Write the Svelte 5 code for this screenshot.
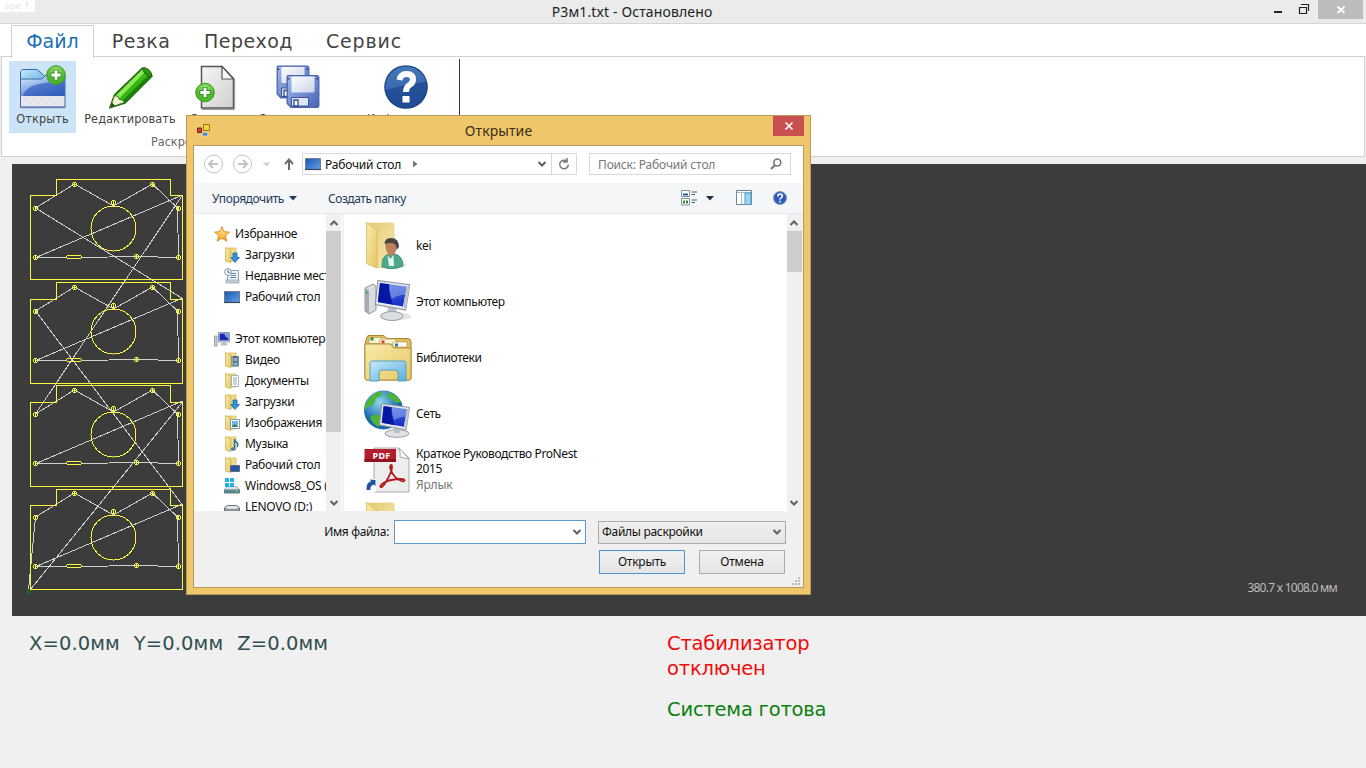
<script>
  const tabs = [
    { label: 'Файл', cls: 'file' },
    { label: 'Резка', cls: 'cut' },
    { label: 'Переход', cls: 'jump' },
    { label: 'Сервис', cls: 'service' }
  ];

  const tools = [
    { label: 'Открыть', icon: 'open', cls: 't-open' },
    { label: 'Редактировать', icon: 'pencil', cls: 't-edit' },
    { label: 'Создать', icon: 'newdoc', cls: 't-new' },
    { label: 'Сохранить как', icon: 'save', cls: 't-save' },
    { label: 'Информация', icon: 'help', cls: 't-help' }
  ];

  const favourites = [
    { label: 'Загрузки', icon: 'downloads' },
    { label: 'Недавние места', icon: 'recent' },
    { label: 'Рабочий стол', icon: 'desktop' }
  ];

  const computer = [
    { label: 'Видео', icon: 'video' },
    { label: 'Документы', icon: 'documents' },
    { label: 'Загрузки', icon: 'downloads' },
    { label: 'Изображения', icon: 'pictures' },
    { label: 'Музыка', icon: 'music' },
    { label: 'Рабочий стол', icon: 'deskfolder' },
    { label: 'Windows8_OS (C:)', icon: 'osdrive' },
    { label: 'LENOVO (D:)', icon: 'drive' }
  ];

  const files = [
    { label: 'kei', icon: 'user' },
    { label: 'Этот компьютер', icon: 'pc' },
    { label: 'Библиотеки', icon: 'libraries' },
    { label: 'Сеть', icon: 'network' },
    { label: 'Краткое Руководство ProNest 2015', note: 'Ярлык', icon: 'pdf' },
    { label: '', icon: 'folder' }
  ];

  // dy moves the holes, top / shoulder / bottom are the edges of the sheet outline
  const parts = [
    { dy: 0, top: 179.5, shoulder: 195.5, bottom: 279.5 },
    { dy: 103, top: 282.5, shoulder: 299.5, bottom: 383.5 },
    { dy: 206, top: 385.5, shoulder: 402.5, bottom: 486.5 },
    { dy: 309, top: 489.5, shoulder: 505.5, bottom: 589.5 }
  ];
  const holes = [[74, 184], [152, 184], [113, 202], [35, 208], [178, 208], [35, 257], [136, 256], [178, 257]];
</script>

{#snippet plus(cx, cy, r)}
  <circle {cx} {cy} {r} fill="url(#green)" stroke="#3f9a22" stroke-width="1" />
  <path d="M{cx - 5.6} {cy}H{cx + 5.6}M{cx} {cy - 5.6}V{cy + 5.6}" stroke="#3b8d22" stroke-width="5" />
  <path d="M{cx - 4.7} {cy}H{cx + 4.7}M{cx} {cy - 4.7}V{cy + 4.7}" stroke="#fff" stroke-width="2.8" />
{/snippet}

{#snippet floppy(x, y)}
  <g transform="translate({x} {y})">
    <path d="M1.5 0.7H31l1.3 1.3V31l-1.3 1.3H4.5L0.7 28.5V1.5Z" fill="url(#disk)" stroke="#4a63ab" stroke-width="1.3" />
    <path d="M5 1.5H28V16.5q0 1-1 1H6q-1 0-1-1Z" fill="url(#silver)" />
    <path d="M5 22.5H22V31H5Z" fill="#dfe5f2" stroke="#3b549e" stroke-width="1" />
    <path d="M7.5 25h4v6h-4Z" fill="#fff" stroke="#334a92" stroke-width="1.3" />
    <path d="M2 3v1.5M30.5 3v1.5" stroke="#26366d" stroke-width="1.5" />
  </g>
{/snippet}

{#snippet toolIcon(name)}
  <svg class="tool-icon" viewBox="0 0 48 48">
    {#if name === 'open'}
      <path d="M1.500 18V7.500L3.500 5.500H18l8 7v8H1.500Z" fill="url(#sky)" stroke="#3568b4" />
      <path d="M1.500 15H23l4-4H46v32.500H1.500Z" fill="url(#blue)" stroke="#4666a6" />
      <path d="M4 31q3-7 12-10 10-3 29.500-4V32H4Z" fill="#2450b8" opacity=".6" />
      <path d="M2 32H45.500V42.500H2Z" fill="#e6e8ee" />
      <path d="M5 35h1m3 0h1m3 0h1m3 0h1m3 0h1m3 0h1m3 0h1m3 0h1m3 0h1m3 0h1M7 38h1m3 0h1m3 0h1m3 0h1m3 0h1m3 0h1m3 0h1m3 0h1m3 0h1" stroke="#c4cad6" />
      <path d="M2 43.500H46" stroke="#6f84a8" stroke-width="1.500" />
      {@render plus(37, 11, 9.300)}
    {:else if name === 'pencil'}
      <path d="M4 43.500L8.500 31 36.500 4q6 .5 9.500 8L19 39Z" fill="#39b417" stroke="#23650f" stroke-width="1.500" />
      <path d="M9.500 32L37 5l3.500 1.500L13 34.500Z" fill="#8bea55" />
      <path d="M16 37L44 10l2 2.500L19 38.500Z" fill="#168207" />
      <path d="M4 43.500l4.500-12 3.500 1 1.500 3 3 .5 2 2.500Z" fill="#f4efd0" stroke="#297a15" />
      <path d="M4 43.500l2-5 3 3.200Z" fill="#244715" />
      <ellipse cx="41.300" cy="8" rx="5.300" ry="2.400" transform="rotate(45 41.300 8)" fill="#2a9a13" stroke="#23690f" />
    {:else if name === 'newdoc'}
      <path d="M10.500 2.500H31l11.500 12V44H10.500Z" fill="url(#page)" stroke="#555" stroke-width="1.500" />
      <path d="M31 2.500V15H42.500Z" fill="#f9f9f9" stroke="#555" stroke-width="1.200" />
      <path d="M11 45.500H43.700V15" stroke="#999" fill="none" />
      {@render plus(14, 28.500, 9.300)}
    {:else if name === 'save'}
      {@render floppy(2.500, 1.500)}
      {@render floppy(12.500, 11)}
    {:else}
      <circle cx="24" cy="23" r="21.800" fill="#1d4688" />
      <circle cx="24" cy="23" r="20.500" fill="url(#help)" />
      <path d="M3.500 26Q22 21 44.500 17.500A20.500 20.500 0 0 1 4 29Z" fill="#173f86" opacity=".6" />
      <path d="M17.500 16q1-6 7-6 6.500 0 6.500 5.500 0 3.500-3.500 5.500-3.500 2-3.500 7" fill="none" stroke="#fff" stroke-width="6" />
      <path d="M20.500 32h7v6.500h-7Z" fill="#fff" />
    {/if}
  </svg>
{/snippet}

{#snippet monitor()}
  <path d="M12 2L43 6 39 31 9.500 25.500Z" fill="#e5e7ec" stroke="#8c939e" stroke-width="1" />
  <path d="M14 4.500L40 8 36.500 27.500 12 23Z" fill="url(#lcd)" />
  <path d="M14 4.500L23 5.700Q22 15 27 25.700L12 23Z" fill="#0717a4" />
  <path d="M23 5.700L40 8 38.500 16Q32 16 25.500 20Q23 12 23 5.700Z" fill="#9bb8f0" opacity=".5" />
  <path d="M40 8l3-2-4 25-2.500-3.500Z" fill="#bfc4cd" />
{/snippet}

{#snippet bigIcon(name)}
  <svg class="big-icon" viewBox="0 0 48 48">
    {#if name === 'user' || name === 'folder'}
      <path d="M4 1l24 0q2 0 2 2V42L14 46Z" fill="url(#folderback)" stroke="#e6cf7a" stroke-width=".7" />
      <path d="M2.500 0.500L13 8V46L2.500 41.500Z" fill="url(#folder)" stroke="#d5b95d" stroke-width=".8" />
      {#if name === 'user'}
        <ellipse cx="32" cy="43" rx="10" ry="3" fill="#bbb" opacity=".45" />
        <path d="M18 45q-1-12 8-13h5q8 2 8 12-10 5-21 1Z" fill="#4ea88a" stroke="#2b7a63" stroke-width=".7" />
        <path d="M23.500 33l3 4 3-4 .5 11h-5Z" fill="#e4f4ee" />
        <path d="M21.500 20q5-4 11 0 1 12-5.500 14Q20.500 31 21.500 20Z" fill="#b98258" />
        <path d="M20.500 22q0-6 6.500-6 8 0 8 9l-2.500 3q0-7-5-7-4 0-7 1Z" fill="#4b4644" />
      {/if}
    {:else if name === 'pc'}
      <path d="M1 10L9 6l3 2V32L5 36 1 33Z" fill="#d9dce1" stroke="#9498a0" />
      <path d="M1 10l4 2V36L1 33Z" fill="#a6abb3" />
      <path d="M2.500 13v3" stroke="#38a349" stroke-width="1.500" />
      <ellipse cx="31" cy="38.500" rx="16" ry="4" fill="#bbb" opacity=".4" />
      <path d="M24 29h8l1 7H23Z" fill="#bfc3cb" />
      <ellipse cx="28" cy="38" rx="11" ry="4.500" fill="#dadde2" stroke="#9ba0a8" />
      <g transform="translate(1.500 .5) scale(1.030 1.020)">{@render monitor()}</g>
    {:else if name === 'libraries'}
      <path d="M1 10l2-7q.5-1.500 2-1.500H20l3 3H44q2.500 0 3 3V44q0 2-2 2H3q-2 0-2-2Z" fill="#e2bd5c" stroke="#a98431" />
      <path d="M5 3.500h16l3 6H5Z" fill="#fbf4d5" stroke="#b99849" stroke-width=".7" />
      <path d="M16 5H31l3 5H15Z" fill="#fbf4d5" stroke="#b99849" stroke-width=".7" />
      <path d="M29 8H43v5H29Z" fill="#fff" stroke="#b99849" stroke-width=".7" />
      <path d="M6.500 3.500h3v3h-3Z" fill="#2c9240" /><path d="M17.500 6.500h3v3h-3Z" fill="#d33b24" /><path d="M31 9.500h3v3h-3Z" fill="#2c78b4" />
      <path d="M1 10H26l4 4H47V44q0 2-2 2H3q-2 0-2-2Z" fill="url(#folder)" stroke="#b28f3c" />
      <path d="M6 29q0-2 2-2H40q2 0 2 2V47H34V39q0-3-3-3H18q-3 0-3 3v8H6Z" fill="url(#sky)" stroke="#579fc1" />
    {:else if name === 'network'}
      <circle cx="19.500" cy="20" r="19.500" fill="url(#globe)" />
      <path d="M4 10Q10 3 16 1q4 2 1 5l-5 2-2 6-6 3-3 3Q0 15 4 10ZM24 2q9 2 13 10l-5 1-4-4-5-1ZM9 25l6 0 3 5-3 7q-7-3-9-10Z" fill="#4eb53b" />
      <ellipse cx="33" cy="43.500" rx="12" ry="3.800" fill="#dfe1e5" stroke="#989da5" />
      <path d="M30 37h6v6h-6Z" fill="#bcc1c9" />
      <g transform="translate(7 12) scale(.9)">{@render monitor()}</g>
    {:else if name === 'pdf'}
      <path d="M10 2H35l10 10V46H10Z" fill="#ededed" stroke="#aaa" />
      <path d="M35 2q2 6 1 9l9 2Z" fill="#fff" stroke="#aaa" />
      <path d="M.500 3H32V16H.500Z" fill="#b21c2c" /><path d="M.500 13H32v3H.500Z" fill="#92121f" />
      <text x="8.500" y="12.800" class="pdf-label">PDF</text>
      <path d="M27 19q-1.500 1-.5 4 3 9 11 12 2 1 3-.5 0-2-6-1.500-9 .5-15 4-4 2.500-3 4 2 1 6-6 5-9 5.500-13 0-4-1-3Z" fill="none" stroke="#b21920" stroke-width="1.800" />
      <path d="M0 33H12V46H0Z" fill="#fff" />
      <path d="M2.500 44Q2 36 7 35.500L6 33.500 11.500 34V40L9.800 38.500Q5.500 40 6.500 44Z" fill="#1b57a1" />
    {/if}
  </svg>
{/snippet}

{#snippet smallIcon(name)}
  <svg class="small-icon" viewBox="0 0 16 16">
    {#if name === 'star'}
      <path d="M8 .700l2 5 5.500.4-4.200 3.600 1.500 5.500L8 12.200l-4.800 3 1.500-5.500L.500 6.100 6 5.700Z" fill="url(#star)" stroke="#dc8520" stroke-width=".9" />
    {:else if name === 'desktop'}
      <path d="M.500 2.500h15v11H.500Z" fill="url(#screen)" stroke="#6b7e91" />
      <path d="M0 13.500h16" stroke="#35475a" stroke-width="1.200" />
    {:else if name === 'computer'}
      <path d="M.500 5h2.500v10H.500Z" fill="#c8cdd3" stroke="#7d848c" stroke-width=".7" />
      <path d="M4.500 1.500h11v9.500h-11Z" fill="#e1e3e8" stroke="#969ca6" />
      <path d="M5.500 2.500h9v7h-9Z" fill="#142ab4" /><path d="M10 2.500h4.500v5Q11 6 10 2.500Z" fill="#86a4e8" />
      <path d="M8 11.500h4l1.500 3h-7Z" fill="#b6bbc4" />
    {:else if name === 'recent'}
      <path d="M5 2.500h9.500v11H3.500V8" fill="#eef3f8" stroke="#8d9dae" /><path d="M2 12h13v3H2Z" fill="#c5d0dd" stroke="#8d9dae" stroke-width=".7" />
      <path d="M7 5.500h5M7 7.500h5M6 9.500h6" stroke="#5d87ba" />
      <circle cx="4" cy="4" r="3.400" fill="#f5f7fa" stroke="#8997a8" /><path d="M4 2v2.300h1.800" fill="none" stroke="#50657d" />
    {:else if name === 'osdrive'}
      <path d="M3 9H13l2.500 3v3H.500v-3Z" fill="#aab3bb" stroke="#68737c" />
      <path d="M3 9H13l2.500 3H.500Z" fill="#d9dde1" />
      <path d="M.500 11.500h15V15H.500Z" fill="#5d8290" /><path d="M11 13.300h3" stroke="#57d45b" stroke-width="1.300" />
      <path d="M1 0h4v4H1ZM6 0h4v4H6ZM1 5h4v4H1ZM6 5h4v4H6Z" fill="#1eb2e8" />
    {:else if name === 'drive'}
      <path d="M.500 9q1-2.500 4-2.500h7q3 0 4 2.500v4q0 1-1 1h-13q-1 0-1-1Z" fill="#8d9398" stroke="#6b7278" />
      <path d="M1 9q1-2 3.500-2h7q2.500 0 3.500 2-7 2-14 0Z" fill="#e3e5e7" />
    {:else}
      <path d="M4 1h8v13H4Z" fill="#efdb8b" stroke="#d9bd63" stroke-width=".8" />
      <path d="M1.500.500L7 3v12.500L1.500 14Z" fill="url(#folder)" stroke="#d1b251" stroke-width=".8" />
      {#if name === 'downloads'}
        <path d="M9 6h4v4.500h2.500L11 15.500 6.800 10.500H9Z" fill="#3292dc" stroke="#1768ae" stroke-width=".8" />
      {:else if name === 'video'}
        <path d="M7.500 4H15v10.500H7.500Z" fill="#526879" /><path d="M8.500 4.500v10M14 4.500v10" stroke="#e1e5e8" stroke-dasharray="1 1" /><path d="M9.500 6h3.500v3H9.500Zm0 4.500h3.500v3H9.500Z" fill="#85b8d4" />
      {:else if name === 'documents'}
        <path d="M7.500 2.500H14.500v11H7.500Z" fill="#fff" stroke="#94a6b7" stroke-width=".8" /><path d="M9 5h4M9 7h4M9 9h4M9 11h4" stroke="#6f96bb" stroke-width=".8" />
      {:else if name === 'pictures'}
        <path d="M6.500 4.500h9v9h-9Z" fill="#fff" stroke="#8298a9" /><path d="M8 6h6v6H8Z" fill="#72b8dc" /><path d="M8 11l3-2 3 3H8Z" fill="#3c8253" />
      {:else if name === 'music'}
        <path d="M10.500 13V3q.5 3 3 4 1 2-.5 4" fill="none" stroke="#2273aa" stroke-width="1.500" /><ellipse cx="9" cy="13" rx="2.300" ry="1.700" fill="#2a86bf" />
      {:else}
        <path d="M6.500 8.500h9v6h-9Z" fill="#2856a6" stroke="#5b6d7f" />
      {/if}
    {/if}
  </svg>
{/snippet}

{#snippet chevron(cls, d)}
  <svg class="chev {cls}" viewBox="0 0 10 8"><path {d} fill="none" stroke="#606060" stroke-width="2" /></svg>
{/snippet}

<svg class="defs" aria-hidden="true">
  <defs>
    <linearGradient id="blue" x2=".4" y2="1"><stop offset="0" stop-color="#e2edfb" /><stop offset=".4" stop-color="#8fb3ea" /><stop offset="1" stop-color="#2e59ba" /></linearGradient>
    <linearGradient id="sky" x2="1" y2="1"><stop offset="0" stop-color="#c8e9fa" /><stop offset="1" stop-color="#59aee0" /></linearGradient>
    <linearGradient id="lcd" x2=".4" y2="1"><stop offset="0" stop-color="#5a7be6" /><stop offset="1" stop-color="#1734c7" /></linearGradient>
    <radialGradient id="green" cy=".3"><stop offset="0" stop-color="#a7e678" /><stop offset="1" stop-color="#49b82a" /></radialGradient>
    <linearGradient id="disk" x2="1" y2="1"><stop offset="0" stop-color="#a4bbeb" /><stop offset="1" stop-color="#4265b4" /></linearGradient>
    <linearGradient id="silver" x2="1" y2="1"><stop offset="0" stop-color="#fff" /><stop offset="1" stop-color="#c9d3e8" /></linearGradient>
    <linearGradient id="page" x2="1" y2="1"><stop offset="0" stop-color="#f6f6f6" /><stop offset="1" stop-color="#cfcfcf" /></linearGradient>
    <linearGradient id="help" x2="0" y2="1"><stop offset="0" stop-color="#4678b6" /><stop offset="1" stop-color="#2a61a9" /></linearGradient>
    <linearGradient id="folder" x2="1" y2="1"><stop offset="0" stop-color="#f8ebaa" /><stop offset="1" stop-color="#e6c765" /></linearGradient>
    <linearGradient id="folderback" x2="1" y2="1"><stop offset="0" stop-color="#e5cb75" /><stop offset="1" stop-color="#f7e8ae" /></linearGradient>
    <radialGradient id="globe" cx=".4" cy=".3"><stop offset="0" stop-color="#8ed9ef" /><stop offset="1" stop-color="#1967ae" /></radialGradient>
    <linearGradient id="star" x2="0" y2="1"><stop offset="0" stop-color="#ffe98a" /><stop offset="1" stop-color="#f8a52a" /></linearGradient>
    <linearGradient id="screen" x2="1" y2="1"><stop offset="0" stop-color="#1e55b4" /><stop offset="1" stop-color="#5ea2e5" /></linearGradient>
  </defs>
</svg>

<div class="window">
  <header class="titlebar">
    <span class="ghost">аре 1</span>
    <span class="title">Р3м1.txt - Остановлено</span>
    <div class="win-buttons">
      <svg class="wb" viewBox="0 0 44 20"><path d="M0 12H8" stroke="#222" stroke-width="2" /><path d="M25.500 7.500h7v6h-7ZM25 7.500h8M27.500 5V4.500h7v6.500" fill="none" stroke="#222" stroke-width="1.200" /></svg>
      <div class="win-close"><svg viewBox="0 0 10 10"><path d="M1.500 1.500l7 6.500M8.500 1.500l-7 6.500" stroke="#fff" stroke-width="1.800" /></svg></div>
    </div>
  </header>

  <nav class="tabs">
    {#each tabs as t}<div class="tab {t.cls}"><span>{t.label}</span></div>{/each}
  </nav>

  <section class="ribbon">
    <div class="group">
      <div class="tool-row">
        {#each tools as t}
          <div class="tool {t.cls}">{@render toolIcon(t.icon)}<span>{t.label}</span></div>
        {/each}
      </div>
      <div class="group-name">Раскрой</div>
    </div>
  </section>

  <main class="canvas">
    <svg class="drawing" viewBox="12 164 174 452">
      <g fill="none" stroke="#d0d0d0" stroke-width="1" shape-rendering="crispEdges">
        {#each parts as p}
          <path transform="translate(0 {p.dy})" d="M182.500 195L36 257.500H66M82 257.500L136 256.500L178.500 257.500 177.500 208 152.500 184 113.500 206 74.500 184 35.500 208" />
        {/each}
        <path d="M35.500 208L182.500 298.500M182.500 195L35.500 414M35.500 311L182.500 505M182.500 402L30 590M35.500 517L28.500 590" />
      </g>
      <g fill="none" stroke="#fafa3c" stroke-width="1" shape-rendering="crispEdges">
        {#each parts as p}
          <path d="M30.500 {p.shoulder}H56.500V{p.top}H170.500V{p.shoulder}H182.500V{p.bottom}H30.500Z" />
          <g transform="translate(0 {p.dy})">
            <circle cx="113.500" cy="228.500" r="22.500" />
            <path d="M67 255.500H81M67 258.500H81M66.500 256v2M81.500 256v2" />
            {#each holes as [x, y]}<circle cx={x + 0.500} cy={y + 0.500} r="2" /><path d="M{x + 0.500} {y - 1}v3" />{/each}
          </g>
        {/each}
      </g>
      <path d="M28.500 589V594" stroke="#176b1d" stroke-width="3" />
    </svg>
    <span class="dims">380.7 x 1008.0 мм</span>
  </main>

  <footer class="status">
    <div class="coords"><span>X=0.0мм</span><span>Y=0.0мм</span><span>Z=0.0мм</span></div>
    <div class="messages">
      <p class="bad">Стабилизатор<br />отключен</p>
      <p class="good">Система готова</p>
    </div>
  </footer>

  <div class="dialog">
    <div class="dlg-title">
      <svg class="form-icon" viewBox="0 0 14 14"><path d="M.500 5h4v4.500h-4Z" fill="#d0402b" stroke="#7a241b" /><path d="M6.500 1.500h6v6h-6Z" fill="#f6d440" stroke="#967620" /><path d="M5.500 9.500h5v3.500h-5Z" fill="#4a86d0" stroke="#c9d5e2" stroke-width=".7" /></svg>
      <span class="dlg-name">Открытие</span>
      <div class="dlg-close"><svg viewBox="0 0 10 10"><path d="M1.500 1.500l7 7M8.500 1.500l-7 7" stroke="#fff" stroke-width="1.600" /></svg></div>
    </div>
    <div class="dlg-body">
      <div class="address">
        <svg class="nav-icons" viewBox="0 0 100 24">
          <g fill="none" stroke="#c3c3c3"><circle cx="11.500" cy="12" r="9" /><circle cx="40.500" cy="12" r="9" /></g>
          <path d="M16 12H8M11 8L7 12l4 4M36 12H44M41 8l4 4-4 4" fill="none" stroke="#c4c4c4" stroke-width="2" />
          <path d="M60.500 10.500h8l-4 4Z" fill="#d0d0d0" />
          <path d="M87 18V8M83 12l4-4.500 4 4.500" fill="none" stroke="#6c6c6c" stroke-width="2" />
        </svg>
        <div class="path">
          {@render smallIcon('desktop')}
          <span>Рабочий стол</span>
          <svg class="tri" viewBox="0 0 6 8"><path d="M0 0.500l4.500 3.500-4.500 3.500Z" fill="#777" /></svg>
          <i></i>
          {@render chevron('', 'M1.500 2l3.500 3.500L8.500 2')}
          <div class="refresh"><svg viewBox="0 0 12 12"><path d="M8.800 3.200A4.300 4.300 0 1 0 10.300 6.500M9 0v4H5" fill="none" stroke="#777" stroke-width="1.500" /></svg></div>
        </div>
        <div class="search">
          <span>Поиск: Рабочий стол</span>
          <svg viewBox="0 0 12 12"><circle cx="7.300" cy="4.500" r="3.500" fill="none" stroke="#777" stroke-width="1.600" /><path d="M5 7L1 11" stroke="#777" stroke-width="2.200" /></svg>
        </div>
      </div>
      <div class="toolbar">
        <span class="organize">Упорядочить</span>
        <svg class="drop" viewBox="0 0 8 5"><path d="M0 0h8L4 4.500Z" fill="#1e3a5c" /></svg>
        <span class="mkdir">Создать папку</span>
        <i></i>
        <svg class="view" viewBox="0 0 17 16"><path d="M.500.500h8v6h-8ZM.500 8.500h8v6.500h-8Z" fill="#fff" stroke="#8193a0" /><path d="M2 3.500h5v2H2Z" fill="#1f6091" /><path d="M2 10.500h2v3H2Zm3 0h2v3H5Z" fill="#398b44" /><path d="M10.500 2H16M10.500 4.500H14M10.500 10H16M10.500 12.500H14" stroke="#43596d" /></svg>
        <svg class="drop2" viewBox="0 0 8 5"><path d="M0 0h8L4 4.500Z" fill="#1e2f4c" /></svg>
        <svg class="pane" viewBox="0 0 17 16"><path d="M.500.500h15v14H.500Z" fill="#fff" stroke="#6d8798" /><path d="M1 2.500H15M5.500 3v11" stroke="#aebbc5" /><path d="M9 3H15v11.500H9Z" fill="#9ad4f5" stroke="#4a9cca" /></svg>
        <svg class="qmark" viewBox="0 0 14 14"><circle cx="7" cy="7" r="6.500" fill="#2c59bd" stroke="#8a97ad" /><path d="M4.800 5.500q0-2.500 2.300-2.500 2.200 0 2.200 2 0 1.300-1.200 1.900Q7 7.500 7 8.500M7 9.800v1.700" fill="none" stroke="#fff" stroke-width="1.600" /></svg>
      </div>
      <div class="browse">
        <aside class="tree">
          <div class="tree-list">
            <div class="node root">{@render smallIcon('star')}<span>Избранное</span></div>
            {#each favourites as f}<div class="node">{@render smallIcon(f.icon)}<span>{f.label}</span></div>{/each}
            <div class="node root after-gap">{@render smallIcon('computer')}<span>Этот компьютер</span></div>
            {#each computer as f}<div class="node">{@render smallIcon(f.icon)}<span>{f.label}</span></div>{/each}
          </div>
          <div class="scroll">
            {@render chevron('up', 'M1.500 6L5 2.500 8.500 6')}
            <div class="thumb tall"></div><i></i>
            {@render chevron('down', 'M1.500 2L5 5.500 8.500 2')}
          </div>
        </aside>
        <div class="files">
          {#each files as f}
            <div class="file-row">{@render bigIcon(f.icon)}<div class="file-text"><span>{f.label}</span>{#if f.note}<em>{f.note}</em>{/if}</div></div>
          {/each}
        </div>
        <div class="scroll right">
          {@render chevron('up', 'M1.500 6L5 2.500 8.500 6')}
          <div class="thumb short"></div><i></i>
          {@render chevron('down', 'M1.500 2L5 5.500 8.500 2')}
        </div>
      </div>
      <div class="dlg-footer">
        <div class="row first">
          <label for="fname">Имя файла:</label>
          <div class="combo" id="fname">{@render chevron('', 'M1.500 2L5 5.500 8.500 2')}</div>
          <div class="filter"><span>Файлы раскройки</span>{@render chevron('', 'M1.500 2L5 5.500 8.500 2')}</div>
        </div>
        <div class="row second">
          <button class="primary">Открыть</button>
          <button>Отмена</button>
        </div>
        <svg class="grip" viewBox="0 0 9 9"><path d="M6 0h2v2H6ZM3 3h2v2H3ZM6 3h2v2H6ZM0 6h2v2H0ZM3 6h2v2H3ZM6 6h2v2H6Z" fill="#bbb" /></svg>
      </div>
    </div>
  </div>
</div>

<style>
  :global(body) { margin: 0; overflow: hidden; }
  .defs { position: absolute; width: 0; height: 0; }
  svg { display: block; flex: none; }
  .window { position: relative; width: 1366px; height: 768px; background: #f0f0f0; display: flex; flex-direction: column; overflow: hidden; font-family: "Noto Sans", "Open Sans", sans-serif; font-size: 12px; color: #111; white-space: nowrap; }

  .titlebar { height: 24px; background: #ebebeb; border-bottom: 1px solid #d4d4d4; display: grid; grid-template-columns: 35px 1fr 92px; box-sizing: border-box; flex: none; }
  .ghost { height: 12px; background: #fff; color: #e4e4e4; font-size: 9.500px; line-height: 12px; padding-left: 4px; letter-spacing: .3px; box-sizing: border-box; }
  .title { text-align: center; font-size: 14px; line-height: 23px; letter-spacing: 0.130px; padding-right: 45px; color: #222; }
  .win-buttons { display: flex; }
  .wb { width: 44px; height: 20px; }
  .win-close { width: 45px; height: 19px; background: #bcbcbc; display: flex; align-items: center; justify-content: center; }
  .win-close svg { width: 10px; height: 10px; }

  .tabs { height: 32px; background: #fff; display: flex; padding-left: 11px; font-family: "DejaVu Sans", sans-serif; font-size: 19px; color: #444; }
  .tab { display: flex; align-items: center; justify-content: center; height: 31px; margin-top: 1px; box-sizing: border-box; border: 1px solid transparent; border-bottom: 0; }
  .file { width: 83px; border-color: #d0d0d0; background: #fff; color: #1a6fb4; height: 33px; z-index: 1; padding-bottom: 3px; }
  .cut { width: 94px; letter-spacing: .400px; }
  .jump { width: 121px; letter-spacing: .450px; }
  .service { width: 110px; letter-spacing: .850px; }
  .ribbon { height: 101px; background: #fff; border: 1px solid #d0d0d0; box-sizing: border-box; margin: 0 1px; display: flex; flex: none; }
  .group { width: 457px; margin: 2px 0 0; border-right: 1px solid #26405a; height: 97px; box-sizing: content-box; overflow: hidden; }
  .tool-row { display: flex; height: 74px; padding: 2px 0 0 7px; }
  .tool { display: flex; flex-direction: column; align-items: center; height: 73px; flex: none; font-family: "DejaVu Sans Condensed", "DejaVu Sans", sans-serif; font-size: 12.600px; color: #444; }
  .tool span { line-height: 16px; margin-top: -1px; letter-spacing: .1px; }
  .tool-icon { width: 48px; height: 48px; margin-top: 3px; }
  .t-open { width: 67px; background: #cce4f6; height: 72px; }
  .t-edit { width: 108px; letter-spacing: .100px; }
  .t-new { width: 61px; }
  .t-save { width: 106px; }
  .t-save span { padding-left: 10px; }
  .t-help { width: 110px; }
  .group-name { text-align: left; padding-left: 149px; font-family: "DejaVu Sans Condensed", sans-serif; font-size: 12.500px; color: #666; line-height: 14px; }

  .canvas { height: 452px; margin: 7px 0 0 12px; background: #3c3c3c; display: flex; justify-content: space-between; flex: none; }
  .drawing { width: 174px; height: 452px; }
  .dims { align-self: flex-end; margin: 0 29px 20px 0; font-size: 12px; line-height: 16px; color: #bbb; letter-spacing: -0.750px; }

  .status { display: grid; grid-template-columns: 638px 1fr; padding: 15px 0 0 29px; font-family: "DejaVu Sans", sans-serif; font-size: 19.500px; line-height: 25px; color: #2f4f4f; }
  .coords { display: flex; gap: 14px; letter-spacing: .100px; }
  .messages { letter-spacing: -0.200px; }
  .messages p { margin: 0 0 16px; }
  .bad { color: #f00a0a; }
  .good { color: #0b800b; }

  .dialog { position: absolute; left: 186px; top: 115px; width: 625px; height: 480px; box-sizing: border-box; background: #efc669; border: 1px solid #b79c61; padding: 0 6px 6px; display: flex; flex-direction: column; letter-spacing: -0.300px; }
  .dlg-title { height: 29px; display: grid; grid-template-columns: 30px 1fr 31px; }
  .form-icon { width: 14px; height: 14px; margin: 7px 0 0 4px; }
  .dlg-name { text-align: center; font-size: 14px; line-height: 30px; color: #3b3018; letter-spacing: .100px; padding-left: 1px; }
  .dlg-close { width: 31px; height: 20px; background: #c85050; display: flex; align-items: center; justify-content: center; }
  .dlg-close svg { width: 10px; height: 10px; }
  .dlg-body { border: 1px solid #b79c61; background: #fff; flex: 1; display: flex; flex-direction: column; min-height: 0; }

  .address { height: 37px; display: flex; align-items: center; padding: 0 0 1px 8px; box-sizing: border-box; flex: none; }
  .nav-icons { width: 100px; height: 24px; }
  .path { width: 275px; height: 22px; box-sizing: border-box; border: 1px solid #d9d9d9; display: flex; align-items: center; padding-left: 2px; }
  .path span { margin-left: 4px; letter-spacing: -0.200px; }
  .path .tri { width: 6px; height: 8px; margin-left: 12px; }
  i { flex: 1; }
  .chev { width: 10px; height: 8px; }
  .refresh { width: 24px; height: 20px; border-left: 1px solid #d9d9d9; margin-left: 4px; display: flex; align-items: center; justify-content: center; }
  .refresh svg { width: 12px; height: 12px; }
  .search { margin-left: 12px; width: 202px; height: 22px; box-sizing: border-box; border: 1px solid #d9d9d9; display: flex; align-items: center; justify-content: space-between; padding: 0 8px; color: #777; letter-spacing: -0.170px; }
  .search svg { width: 12px; height: 12px; }

  .toolbar { height: 31px; box-sizing: border-box; background: #f5f6f7; border-bottom: 1px solid #e6e8ea; display: flex; align-items: center; padding: 0 16px 0 18px; color: #1e395b; letter-spacing: -0.430px; flex: none; }
  .drop, .drop2 { width: 8px; height: 5px; }
  .drop { margin-left: 5px; }
  .mkdir { margin-left: 31px; }
  .view { width: 17px; height: 16px; }
  .drop2 { margin-left: 8px; }
  .pane { width: 17px; height: 16px; margin-left: 22px; }
  .qmark { width: 14px; height: 14px; margin-left: 20px; }

  .browse { height: 297px; display: flex; flex: none; overflow: hidden; }
  .tree { width: 148px; border-right: 2px solid #f1f2f3; display: flex; }
  .tree-list { width: 132px; overflow: hidden; padding-top: 9px; box-sizing: border-box; letter-spacing: -0.270px; }
  .node { height: 21px; display: flex; align-items: center; gap: 5px; padding-left: 30px; }
  .node.root { padding-left: 20px; }
  .after-gap { margin-top: 21px; }
  .small-icon { width: 16px; height: 16px; }
  .scroll { width: 15px; background: #f0f0f0; display: flex; flex-direction: column; align-items: center; flex: none; }
  .scroll .up { margin: 5px 0 4px; }
  .scroll .down { margin-bottom: 4px; }
  .thumb { width: 15px; background: #cdcdcd; flex: none; }
  .tall { height: 201px; }
  .short { height: 41px; }
  .right { width: 16px; align-items: flex-start; }
  .right .chev { margin-left: 2px; }
  .files { flex: 1; padding: 4px 0 0 20px; overflow: hidden; }
  .file-row { height: 56px; display: flex; align-items: center; gap: 4px; }
  .big-icon { width: 48px; height: 48px; }
  .file-text { width: 172px; white-space: normal; line-height: 15px; display: flex; flex-direction: column; padding-bottom: 2px; letter-spacing: -0.380px; }
  .file-text em { font-style: normal; color: #777; line-height: 17px; letter-spacing: -0.200px; }
  .pdf-label { font: bold 9px "Noto Sans", sans-serif; fill: #fff; letter-spacing: .3px; }

  .dlg-footer { position: relative; flex: 1; background: #f0f0f0; padding-top: 9px; }
  .row { display: flex; align-items: center; }
  .row label { width: 195px; text-align: right; letter-spacing: -0.350px; padding-bottom: 1px; }
  .combo { width: 192px; height: 24px; margin-left: 5px; box-sizing: border-box; background: #fff; border: 1px solid #5f9bca; display: flex; align-items: center; justify-content: flex-end; padding-right: 3px; }
  .filter { width: 188px; height: 23px; margin-left: 12px; box-sizing: border-box; border: 1px solid #acacac; background: linear-gradient(#efefef, #e5e5e5); display: flex; align-items: center; justify-content: space-between; padding: 0 3px 1px; }
  .second { margin: 6px 0 0 405px; gap: 14px; }
  button { width: 86px; height: 24px; box-sizing: border-box; border: 1px solid #acacac; background: linear-gradient(#f0f0f0, #e5e5e5); font: inherit; letter-spacing: -0.200px; color: #111; padding: 0 0 1px; }
  .primary { border-color: #4a94d8; }
  .grip { position: absolute; right: 2px; bottom: 1px; width: 9px; height: 9px; }
</style>
